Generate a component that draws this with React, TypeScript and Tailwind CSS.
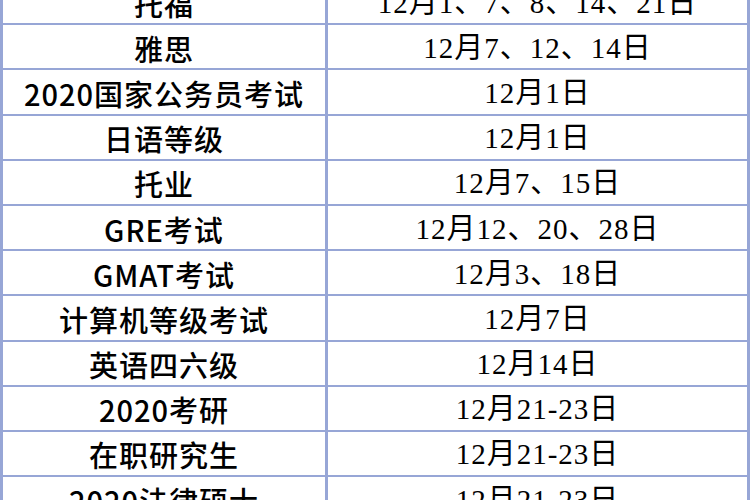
const rows: [string, string][] = [
  ['托福', '12月1、7、8、14、21日'],
  ['雅思', '12月7、12、14日'],
  ['2020国家公务员考试', '12月1日'],
  ['日语等级', '12月1日'],
  ['托业', '12月7、15日'],
  ['GRE考试', '12月12、20、28日'],
  ['GMAT考试', '12月3、18日'],
  ['计算机等级考试', '12月7日'],
  ['英语四六级', '12月14日'],
  ['2020考研', '12月21-23日'],
  ['在职研究生', '12月21-23日'],
  ['2020法律硕士', '12月21-23日'],
];

export default function App() {
  return (
    <div className="w-[750px] h-[500px] overflow-hidden bg-white">
      <div className="-mt-[20px] border-l-[3px] border-r-[3px] border-[#97a6d6] text-black text-[29px] leading-none">
        {rows.map(([exam, date]) => (
          <div key={exam} className="grid grid-cols-[325px_1fr] h-[45.2px] border-b-[2px] border-[#97a6d6]">
            <div className="flex items-center justify-center pt-[3px] border-r-[3px] border-[#97a6d6] tracking-[1px] font-medium font-['Noto_Sans_CJK_SC',sans-serif]">
              {exam}
            </div>
            <div className="flex items-center justify-center pt-[3px] tracking-[1px] font-['Liberation_Serif','Noto_Sans_CJK_SC',serif]">
              {date}
            </div>
          </div>
        ))}
      </div>
    </div>
  );
}
